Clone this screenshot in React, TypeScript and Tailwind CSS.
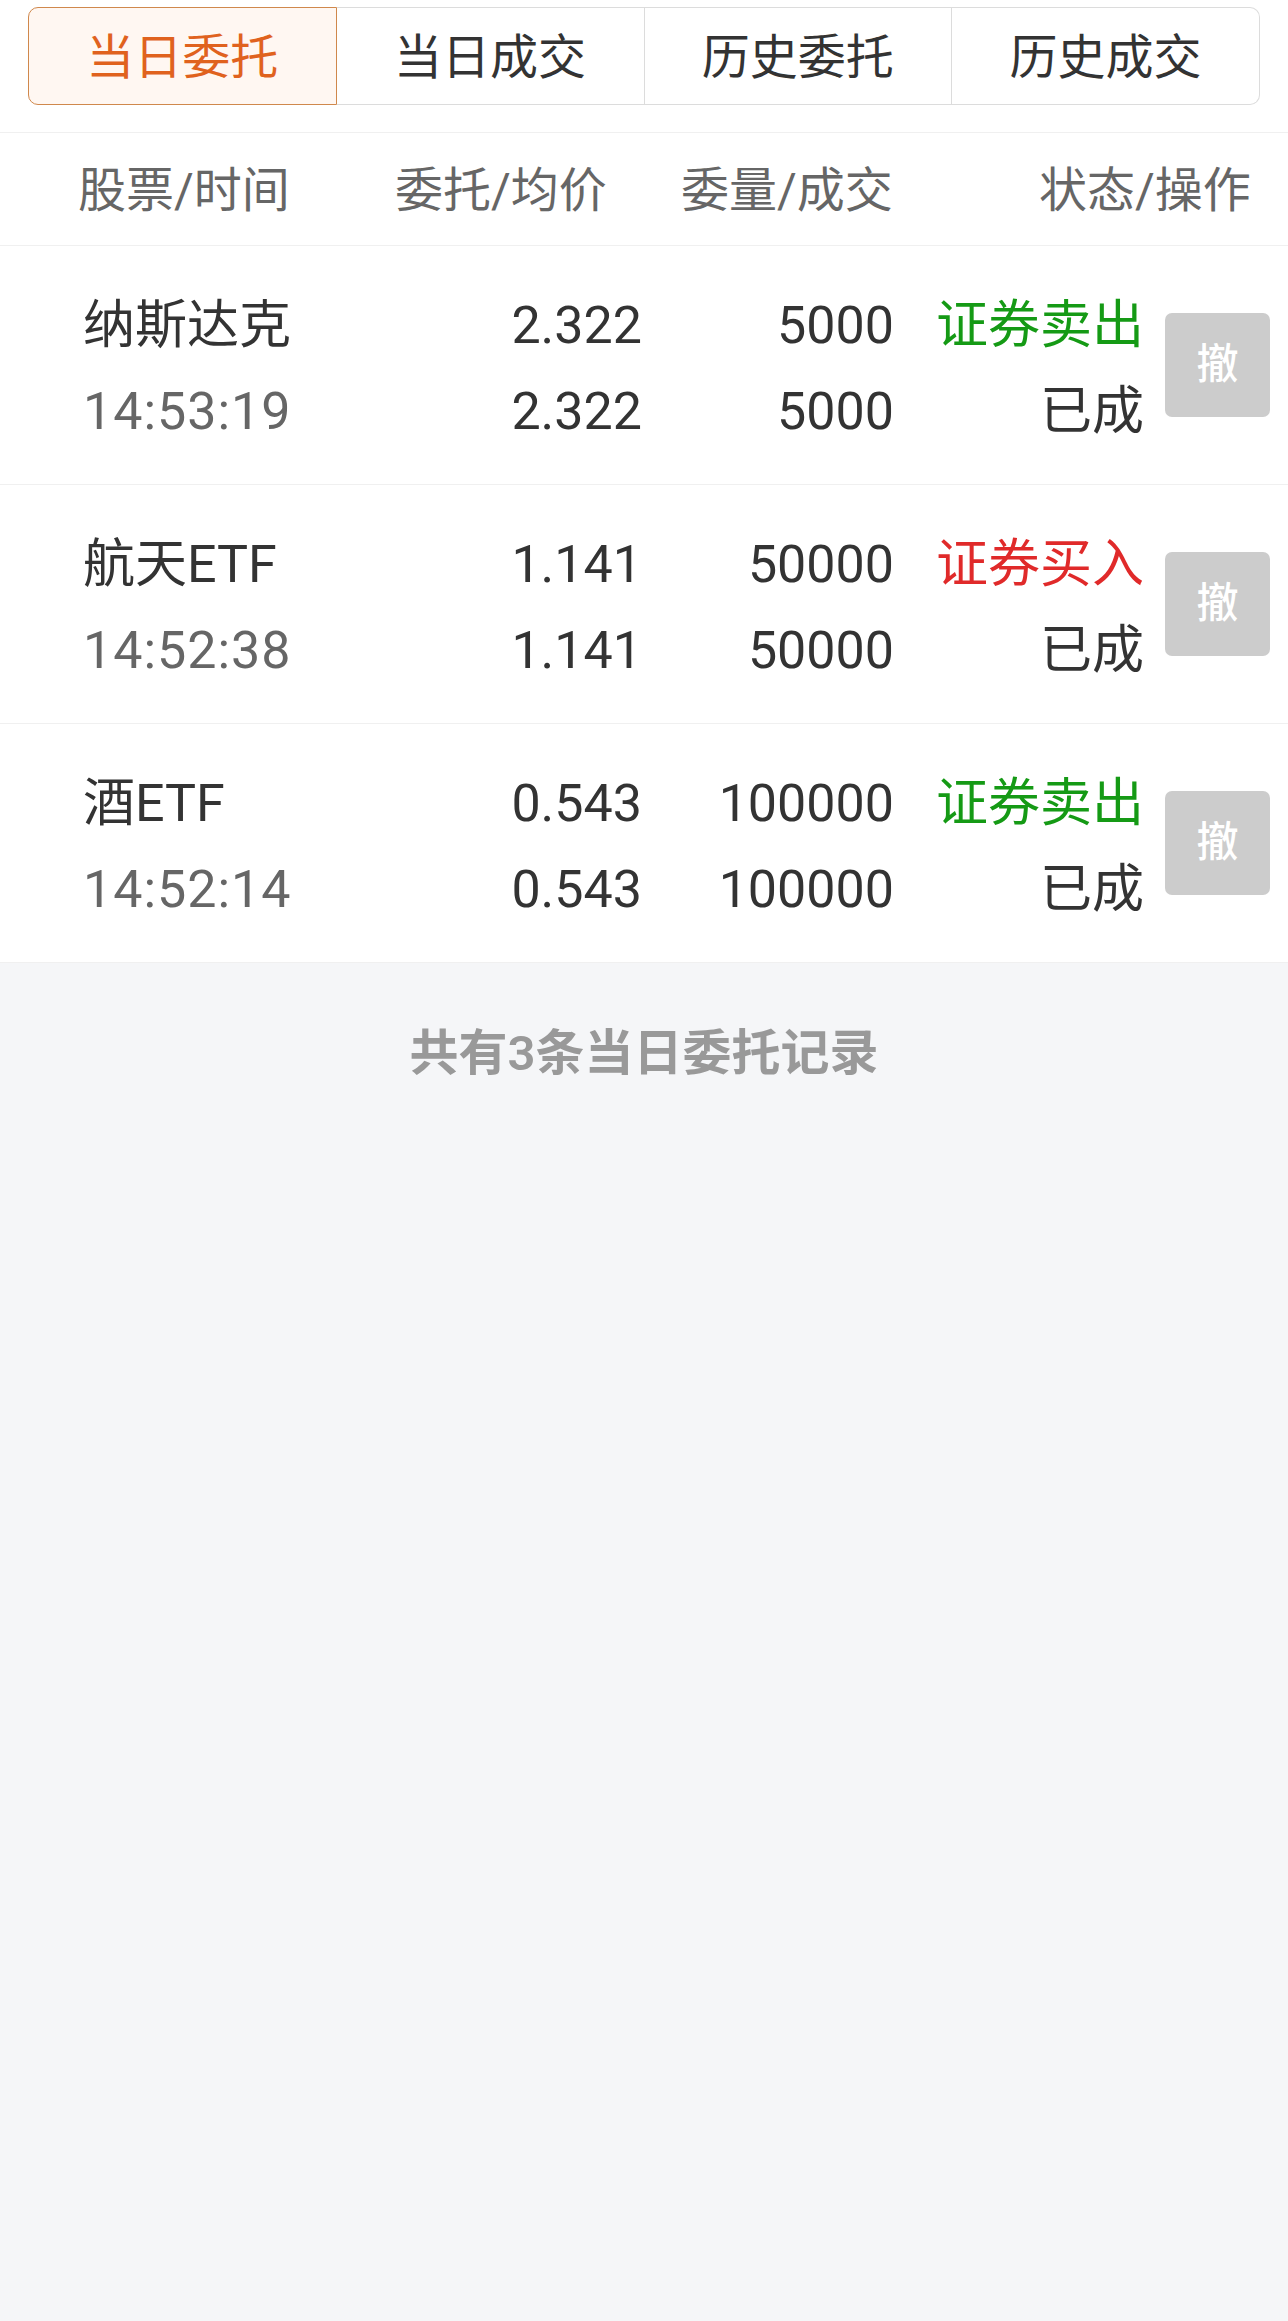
import { useState } from "react";

const tabs = ["当日委托", "当日成交", "历史委托", "历史成交"];

const orders = [
  { name: "纳斯达克", time: "14:53:19", price: "2.322", avg: "2.322", qty: "5000", done: "5000", side: "证券卖出", buy: false, status: "已成" },
  { name: "航天ETF", time: "14:52:38", price: "1.141", avg: "1.141", qty: "50000", done: "50000", side: "证券买入", buy: true, status: "已成" },
  { name: "酒ETF", time: "14:52:14", price: "0.543", avg: "0.543", qty: "100000", done: "100000", side: "证券卖出", buy: false, status: "已成" },
];

export default function App() {
  const [active, setActive] = useState(0);
  return (
    <div className="min-h-screen w-full bg-[#f5f6f8] font-['Roboto','Noto_Sans_CJK_SC',sans-serif]">
      <div className="bg-white px-[28px] pt-[7px] pb-[27px] border-b border-[#f0f0f0]">
        <div className="flex h-[98px]">
          {tabs.map((t, i) => {
            const on = i == active;
            return (
              <div
                key={t}
                onClick={() => setActive(i)}
                className={
                  "flex-1 flex items-center justify-center pt-[3px] text-[48px] cursor-pointer border-y border-r " +
                  (i == 0 ? "border-l rounded-l-[10px] " : "") +
                  (i == tabs.length - 1 ? "rounded-r-[10px] " : "") +
                  (on
                    ? "bg-[#fff7f2] border-[#d0884c] text-[#e0621e]"
                    : "bg-white border-[#dcdcdc] text-[#333333]")
                }
              >
                {t}
              </div>
            );
          })}
        </div>
      </div>

      <div className="bg-white flex items-center h-[113px] pt-[3px] pl-[78px] text-[48px] text-[#666666] border-b border-[#f0f0f0]">
        <span className="w-[317px]">股票/时间</span>
        <span className="w-[286px]">委托/均价</span>
        <span className="w-[358px]">委量/成交</span>
        <span>状态/操作</span>
      </div>

      {orders.map((o, i) => (
        <div
          key={i}
          className="bg-white flex items-center h-[239px] pl-[83px] text-[52px] leading-[86px] text-[#333333] border-b border-[#f0f0f0] last:border-b-0"
        >
          <div className="w-[300px] flex flex-col pt-[8px]">
            <span>{o.name}</span>
            <span className="text-[#666666] tracking-[1px]">{o.time}</span>
          </div>
          <div className="w-[259px] flex flex-col items-end pt-[8px]">
            <span>{o.price}</span>
            <span>{o.avg}</span>
          </div>
          <div className="w-[252px] flex flex-col items-end pt-[8px]">
            <span>{o.qty}</span>
            <span>{o.done}</span>
          </div>
          <div className="w-[250px] flex flex-col items-end pt-[8px]">
            <span className={o.buy ? "text-[#e02a2a]" : "text-[#159a15]"}>{o.side}</span>
            <span>{o.status}</span>
          </div>
          <button className="ml-[21px] w-[105px] h-[104px] rounded-[7px] bg-[#cccccc] text-white text-[42px] font-medium flex items-center justify-center">
            撤
          </button>
        </div>
      ))}

      <div className="pt-[62px] text-center text-[49px] leading-[58px] font-semibold text-[#999999]">
        共有3条当日委托记录
      </div>
    </div>
  );
}
